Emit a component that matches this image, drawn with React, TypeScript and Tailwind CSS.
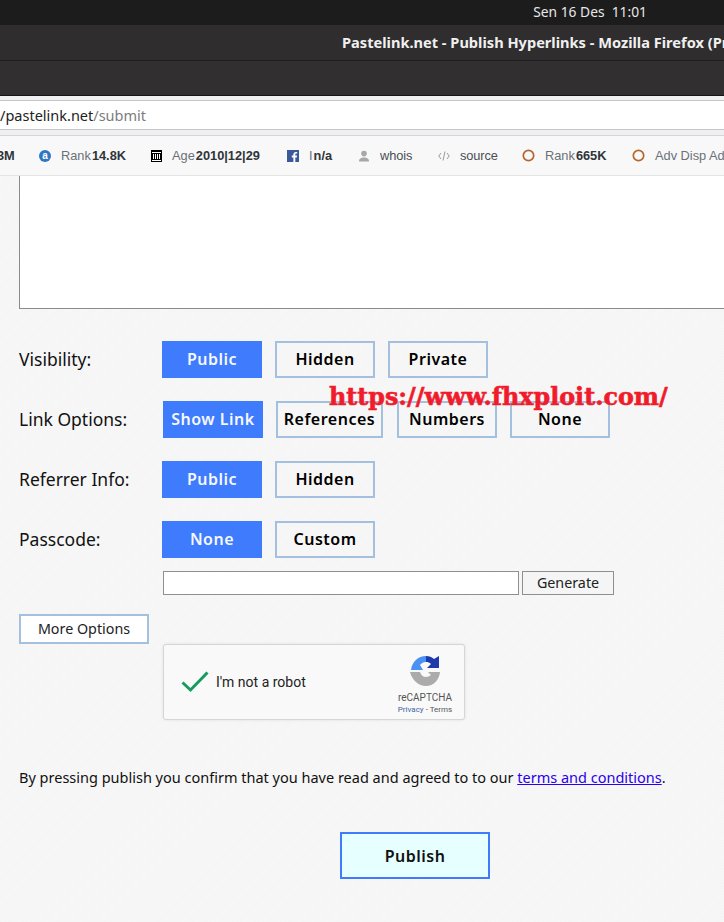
import type { ReactNode } from "react"

const noto = "font-['Noto_Sans','Open_Sans',sans-serif]"

function Opt({ label, active, w = "w-[100px]" }: { label: string; active?: boolean; w?: string }) {
    return (
        <div
            className={`${w} h-[37px] shrink-0 flex items-center justify-center text-[16px] font-semibold tracking-[0.5px] border-2 pb-[1px] ${
                active ? "bg-[#3f7bfd] border-[#3f7bfd] text-[#f4f8ff]" : "border-[#a3c1de] text-black"
            }`}
        >
            {label}
        </div>
    )
}

function Row({ label, children, className = "" }: { label: string; children: ReactNode; className?: string }) {
    return (
        <div className={`flex items-center h-[37px] ${className}`}>
            <div className="w-[143px] shrink-0 text-[17.5px] text-[#111]">{label}</div>
            {children}
        </div>
    )
}

function Ring() {
    return (
        <svg width="13" height="13" viewBox="0 0 13 13" className="shrink-0">
            <circle cx="6.5" cy="6.5" r="5.2" fill="none" stroke="#b5662c" strokeWidth="1.7" />
        </svg>
    )
}

function Stat({ icon, label, value, className }: { icon: ReactNode; label?: string; value?: string; className: string }) {
    return (
        <div className={`flex items-center absolute top-0 h-full ${className}`}>
            {icon}
            {label && <span className="ml-[10px] mt-[1px] text-[#6b7178]">{label}</span>}
            {value && <span className="ml-[1px] mt-[1px] font-bold text-[#30343a]">{value}</span>}
        </div>
    )
}

export default function App() {
    return (
        <div className={`relative w-[724px] h-[922px] overflow-hidden bg-[#f6f6f6] ${noto}`}>
            {/* system bar */}
            <div className="h-[25px] bg-[#1c1c1c] flex items-center justify-end pr-[77px] text-[13.8px] text-[#e8e8e8] whitespace-pre">
                Sen 16 Des  11:01
            </div>
            {/* window title */}
            <div className="h-[36px] bg-[#2f2d2d] border-b border-[#1f1e1e] flex items-center pl-[342px] text-[14.6px] font-bold text-[#f0f0f0] whitespace-nowrap overflow-hidden">
                Pastelink.net - Publish Hyperlinks - Mozilla Firefox (Private Browsing)
            </div>
            <div className="h-[35px] bg-[#312f2f] border-b border-[#161616]" />
            {/* url bar */}
            <div className="h-[39px] bg-[#f0f0f0] pt-[4px]">
                <div className="h-[30px] bg-white border-y border-[#c4c4cb] flex items-center pt-[2px] text-[14.5px] text-[#222] whitespace-nowrap">
                    /pastelink.net<span className="text-[#7d7d7d]">/submit</span>
                </div>
            </div>
            {/* extension bar */}
            <div className="relative h-[41px] bg-[#f8f8f8] border-y border-[#d6d6da] border-b-[#e4e4e4] font-['Liberation_Sans',sans-serif] text-[12.8px] whitespace-nowrap overflow-hidden">
                <div className="absolute left-[-3px] top-0 h-full flex items-center pt-[1px] font-bold text-[#30343a]">3M</div>
                <Stat
                    className="left-[39px]"
                    label="Rank"
                    value="14.8K"
                    icon={
                        <div className="w-[12px] h-[12px] rounded-full bg-[#2f77c4] text-white text-[10px] font-bold leading-[12px] text-center">a</div>
                    }
                />
                <Stat
                    className="left-[151px]"
                    label="Age"
                    value="2010|12|29"
                    icon={
                        <svg width="11" height="12" viewBox="0 0 11 12" className="shrink-0">
                            <path d="M0 0h11v12H0z" fill="#000" />
                            <path d="M1 2h9v1H1zM1 10h9v1H1z" fill="#fff" />
                            <path d="M2 4h1v5H2zM4 4h1v5H4zM6 4h1v5H6zM8 4h1v5H8z" fill="#fff" />
                        </svg>
                    }
                />
                <Stat
                    className="left-[287px]"
                    label="I"
                    value="n/a"
                    icon={
                        <svg width="12" height="12" viewBox="0 0 12 12" className="shrink-0">
                            <rect width="12" height="12" fill="#3b5998" />
                            <path d="M8.3 12V7.4h1.5l.2-1.8H8.3V4.5c0-.5.2-.9.9-.9h1V2c-.2 0-.8-.1-1.4-.1-1.4 0-2.4.9-2.4 2.4v1.3H4.8v1.8h1.6V12z" fill="#fff" />
                        </svg>
                    }
                />
                <div className="absolute left-[358px] top-0 h-full flex items-center text-[#4a4f55] tracking-[-0.1px]">
                    <svg width="12" height="12" viewBox="0 0 12 12" className="shrink-0">
                        <circle cx="6" cy="3.6" r="2.8" fill="#a8a8a8" />
                        <path d="M1 11.5c0-3 2-4 5-4s5 1 5 4z" fill="#a8a8a8" />
                    </svg>
                    <span className="ml-[10px] mt-[1px]">whois</span>
                </div>
                <div className="absolute left-[438px] top-0 h-full flex items-center text-[#4a4f55] tracking-[-0.1px]">
                    <svg width="12" height="12" viewBox="0 0 12 12" className="shrink-0" fill="none" stroke="#9a9a9a" strokeWidth="1">
                        <path d="M3 3 .8 6 3 9M9 3l2.2 3L9 9M7 1.5 5 10.5" />
                    </svg>
                    <span className="ml-[10px] mt-[1px]">source</span>
                </div>
                <Stat className="left-[522px]" label="Rank" value="665K" icon={<Ring />} />
                <Stat className="left-[632px]" label="Adv Disp Ads" icon={<Ring />} />
            </div>

            {/* form */}
            <div className="relative pl-[19px] h-[746px] bg-[repeating-linear-gradient(135deg,#f7f7f7_0,#f7f7f7_1px,#f5f5f5_1px,#f5f5f5_2px)]">
                <div className="h-[133px] w-[720px] bg-white border-l border-b border-[#8a8a8a]" />

                <Row label="Visibility:" className="mt-[32px]">
                    <div className="flex gap-[13px]">
                        <Opt label="Public" active />
                        <Opt label="Hidden" />
                        <Opt label="Private" />
                    </div>
                </Row>
                <Row label="Link Options:" className="mt-[23px]">
                    <div className="flex ml-[1px]">
                        <Opt label="Show Link" active />
                        <Opt label="References" w="w-[107px] ml-[13px]" />
                        <Opt label="Numbers" w="w-[100px] ml-[14px]" />
                        <Opt label="None" w="w-[100px] ml-[13px]" />
                    </div>
                </Row>
                <Row label="Referrer Info:" className="mt-[23px]">
                    <div className="flex gap-[13px]">
                        <Opt label="Public" active />
                        <Opt label="Hidden" />
                    </div>
                </Row>
                <Row label="Passcode:" className="mt-[23px]">
                    <div className="flex gap-[13px]">
                        <Opt label="None" active />
                        <Opt label="Custom" />
                    </div>
                </Row>

                <div className="flex mt-[13px] ml-[144px]">
                    <div className="w-[356px] h-[24px] bg-white border border-[#8f8f8f]" />
                    <div className="ml-[3px] w-[92px] h-[24px] bg-[#f5f5f5] border border-[#8f8f8f] flex items-center justify-center text-[14.3px] text-[#222]">
                        Generate
                    </div>
                </div>

                <div className="mt-[19px] w-[130px] h-[30px] bg-white border-2 border-[#a3c1de] flex items-center justify-center text-[14.3px] text-[#222]">
                    More Options
                </div>

                {/* recaptcha */}
                <div className="ml-[144px] w-[302px] h-[76px] bg-[#f9f9f9] border border-[#d6d6d6] rounded-[3px] shadow-[0_0_3px_rgba(0,0,0,0.1)] flex items-center font-['Roboto',sans-serif]">
                    <svg width="28" height="24" viewBox="0 0 28 24" className="ml-[17px] shrink-0">
                        <path d="M1.5 12.5 9.5 20 26.5 2.5" fill="none" stroke="#169c5e" strokeWidth="3" />
                    </svg>
                    <span className="ml-[7px] text-[14px] text-[#222]">I'm not a robot</span>
                    <div className="ml-auto mr-[11px] w-[56px] flex flex-col items-center">
                        <svg width="32" height="32" viewBox="0 0 32 32" className="mt-[6px]">
                            <path d="M17 1c3 0 6 1 8 3l5-3v12H18l4-4c-1.500-1.500-3-2-5-2z" fill="#1c3aa9" />
                            <path d="M2 15C3 7 9 1 17 1v6c-3 0-5 1.500-6 3l3 5z" fill="#4a90f5" />
                            <path d="M1 17h10c1 3 3 5 6 5 2 0 3.500-.8 5-2l-3-3h12c-.8 8-6.500 14-14 14S3 25 1 17z" fill="#ababab" />
                        </svg>
                        <div className="text-[10px] leading-[12px] text-[#555] mt-[5px]">reCAPTCHA</div>
                        <div className="text-[8px] leading-[10px] text-[#555] mt-[1px] whitespace-nowrap">
                            <span className="text-[#3c66a8]">Privacy</span> - <span>Terms</span>
                        </div>
                    </div>
                </div>

                <p className="mt-[47px] text-[14.5px] leading-[20px] text-[#111] whitespace-nowrap">
                    By pressing publish you confirm that you have read and agreed to to our{" "}
                    <span className="text-[#2a00ee] underline">terms and conditions</span>.
                </p>

                <div className="mt-[45px] ml-[321px] w-[150px] h-[47px] bg-[#e6ffff] border-2 border-[#3f7bfd] flex items-center justify-center text-[16px] font-semibold tracking-[0.5px] text-[#111]">
                    Publish
                </div>
            </div>

            {/* watermark */}
            <div className="absolute left-[329px] top-[381px] font-['DejaVu_Serif',serif] font-bold text-[23.8px] leading-[32px] text-[#f01c2c] [-webkit-text-stroke:0.6px_#f01c2c] whitespace-nowrap">
                https://www.fhxploit.com/
            </div>
        </div>
    )
}
